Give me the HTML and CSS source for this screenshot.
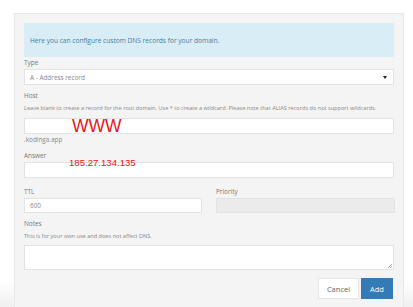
FILE: index.html
```html
<!DOCTYPE html>
<html lang="en">
<head>
    <meta charset="UTF-8">
    <title>DNS Records</title>
    <link rel="stylesheet" href="styles.css">
</head>
<body>
    <div class="panel">
        <!-- Info -->
        <div class="alert">Here you can configure custom DNS records for your domain.</div>

        <!-- Type -->
        <div class="field field-type">
            <div class="label">Type</div>
            <div class="select">
                <span>A - Address record</span>
                <span class="caret"></span>
            </div>
        </div>

        <!-- Host -->
        <div class="field field-host">
            <div class="label">Host</div>
            <div class="help">Leave blank to create a record for the root domain. Use * to create a wildcard. Please note that ALIAS records do not support wildcards.</div>
            <div class="input-wrap">
                <div class="input"></div>
                <span class="mark mark-host">WWW</span>
            </div>
            <div class="suffix">.kodinga.app</div>
        </div>

        <!-- Answer -->
        <div class="field field-answer">
            <div class="label">Answer</div>
            <div class="input-wrap">
                <div class="input"></div>
                <span class="mark mark-ip">185.27.134.135</span>
            </div>
        </div>

        <div class="row">
            <div class="field">
                <div class="label">TTL</div>
                <div class="input">600</div>
            </div>
            <div class="field">
                <div class="label">Priority</div>
                <div class="input disabled"></div>
            </div>
        </div>

        <!-- Notes -->
        <div class="field field-notes">
            <div class="label">Notes</div>
            <div class="help">This is for your own use and does not affect DNS.</div>
            <div class="textarea"><span class="grip"></span></div>
        </div>

        <div class="actions">
            <button class="btn btn-cancel">Cancel</button>
            <button class="btn btn-add">Add</button>
        </div>
    </div>
</body>
</html>
```

FILE: styles.css
```css
body {
    margin: 0;
    padding: 13px 9px 0 14px;
    height: 307px;
    box-sizing: border-box;
    overflow: hidden;
    font-family: "Open Sans", "Liberation Sans", sans-serif;
    color: #777;
    background: linear-gradient(to bottom, #fff 0, #fff 280px, #f0f0f0 307px);
}

.panel {
    width: 390px;
    height: 300px;
    box-sizing: border-box;
    padding: 9px 9px 0 9px;
    background-color: #f4f4f4;
    border: 1px solid #e8e8e8;
    border-bottom: none;
}

/* Info box */
.alert {
    height: 34px;
    box-sizing: border-box;
    padding: 0 6px;
    display: flex;
    align-items: center;
    background-color: #d9edf7;
    color: #3f7fa6;
    font-size: 6.6px;
}

.field {
    display: flex;
    flex-direction: column;
}

.label {
    font-size: 6.4px;
    color: #777;
    line-height: 8px;
    margin-bottom: 2px;
}

.field-type .label { margin-top: 2px; }
.field-host .label { margin-top: 7px; }
.field-answer .label { margin-top: 9px; }
.field-notes .label { margin-top: 7px; }

.help {
    font-size: 5.6px;
    color: #888;
    line-height: 7px;
    margin-top: 3px;
    margin-bottom: 6px;
}

.field-notes .help {
    margin-bottom: 5px;
}

.select,
.input,
.textarea {
    height: 16px;
    box-sizing: border-box;
    background-color: #fff;
    border: 1px solid #e3e3e3;
    font-size: 6.4px;
    color: #888;
    padding: 0 5px;
    display: flex;
    align-items: center;
}

.select {
    justify-content: space-between;
}

.caret {
    width: 0;
    height: 0;
    border-left: 2px solid transparent;
    border-right: 2px solid transparent;
    border-top: 3px solid #222;
    margin-right: 1px;
}

.input-wrap {
    position: relative;
}

/* red annotations drawn over the screenshot */
.mark {
    position: absolute;
    color: #e8141c;
    font-family: "Liberation Sans", Arial, sans-serif;
    white-space: nowrap;
}

.mark-host {
    left: 48px;
    top: -2px;
    font-size: 17.5px;
}

.mark-ip {
    left: 45px;
    top: -5px;
    font-size: 9.6px;
}

.suffix {
    font-size: 6.4px;
    color: #888;
    line-height: 7px;
    margin-top: 2px;
}

.row {
    display: grid;
    grid-template-columns: 178px 179px;
    gap: 14px;
    margin-top: 10px;
}

.row .input {
    height: 15px;
}

.disabled {
    background-color: #ebebeb;
    border-color: #e3e3e3;
}

.textarea {
    height: 25px;
    position: relative;
}

.grip {
    position: absolute;
    right: 1px;
    bottom: 1px;
    width: 4px;
    height: 4px;
    background: linear-gradient(135deg, transparent 45%, #aaa 50%, transparent 60%, transparent 70%, #aaa 75%, transparent 85%);
}

.actions {
    display: flex;
    justify-content: flex-end;
    gap: 2px;
    margin-top: 8px;
    padding-right: 1px;
}

.btn {
    height: 21px;
    border: none;
    font-family: "Open Sans", "Liberation Sans", sans-serif;
    font-size: 7.5px;
    padding: 0;
    cursor: pointer;
}

.btn-cancel {
    width: 41px;
    background-color: #fff;
    color: #666;
    border: 1px solid #e6e6e6;
}

.btn-add {
    width: 32px;
    background-color: #337ab7;
    color: #fff;
}
```
